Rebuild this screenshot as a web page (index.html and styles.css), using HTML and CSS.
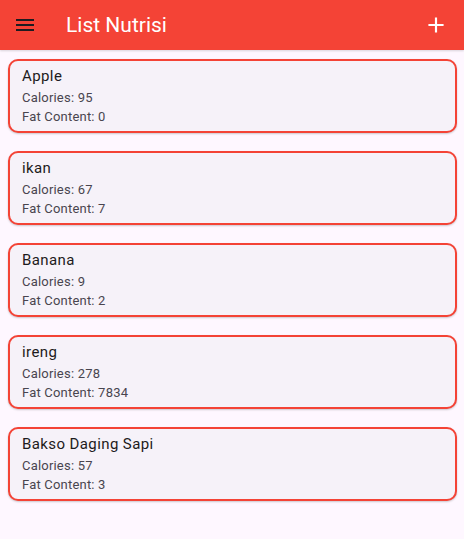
FILE: index.html
```html
<!DOCTYPE html>
<html>
<head>
<meta charset="utf-8">
<link rel="stylesheet" href="styles.css">
</head>
<body>
<header class="appbar">
  <button class="icon-btn menu" aria-label="menu">
    <svg width="24" height="24" viewBox="0 0 24 24"><path d="M3 18h18v-2H3v2zm0-5h18v-2H3v2zm0-7v2h18V6H3z" fill="#1d1b20"/></svg>
  </button>
  <h1 class="title">List Nutrisi</h1>
  <button class="icon-btn add" aria-label="add">
    <svg width="26" height="26" viewBox="0 0 24 24"><path d="M19 13h-6v6h-2v-6H5v-2h6V5h2v6h6v2z" fill="#fff"/></svg>
  </button>
</header>
<main class="list">
  <div class="card">
    <div class="name">Apple</div>
    <div class="info">Calories: 95</div>
    <div class="info">Fat Content: 0</div>
  </div>
  <div class="card">
    <div class="name">ikan</div>
    <div class="info">Calories: 67</div>
    <div class="info">Fat Content: 7</div>
  </div>
  <div class="card">
    <div class="name">Banana</div>
    <div class="info">Calories: 9</div>
    <div class="info">Fat Content: 2</div>
  </div>
  <div class="card">
    <div class="name">ireng</div>
    <div class="info">Calories: 278</div>
    <div class="info">Fat Content: 7834</div>
  </div>
  <div class="card">
    <div class="name">Bakso Daging Sapi</div>
    <div class="info">Calories: 57</div>
    <div class="info">Fat Content: 3</div>
  </div>
</main>
</body>
</html>
```
FILE: styles.css
```css
* { box-sizing: border-box; }
html, body { margin: 0; padding: 0; }
body {
  background: #fef7ff;
  font-family: Roboto, "Noto Sans", sans-serif;
  width: 464px;
  height: 539px;
  overflow: hidden;
}
.appbar {
  height: 50px;
  background: #f44336;
  display: flex;
  align-items: center;
  padding: 0 8px 0 13px;
  box-shadow: 0 1px 2px rgba(0,0,0,0.15);
}
.icon-btn {
  background: none;
  border: 0;
  padding: 0;
  width: 24px;
  height: 24px;
  display: flex;
  align-items: center;
  justify-content: center;
}
.title {
  margin: 0 0 0 29px;
  flex: 1;
  color: #fff;
  font-size: 21px;
  font-weight: 400;
  line-height: 28px;
}
.add { width: 26px; height: 26px; margin-right: 7px; }
.list {
  display: flex;
  flex-direction: column;
  gap: 18px;
  padding: 9px 7px 0 8px;
}
.card {
  border: 2px solid #f44336;
  border-radius: 10px;
  background: #f6f2f9;
  box-shadow: 0 1px 2px rgba(0,0,0,0.2);
  padding: 4px 12px 4px 12px;
  height: 74px;
}
.name {
  font-size: 15px;
  line-height: 23px;
  color: #1d1b20;
  letter-spacing: 0.4px;
}
.info {
  font-size: 13px;
  line-height: 19px;
  color: #49454f;
  letter-spacing: 0.2px;
}
```
